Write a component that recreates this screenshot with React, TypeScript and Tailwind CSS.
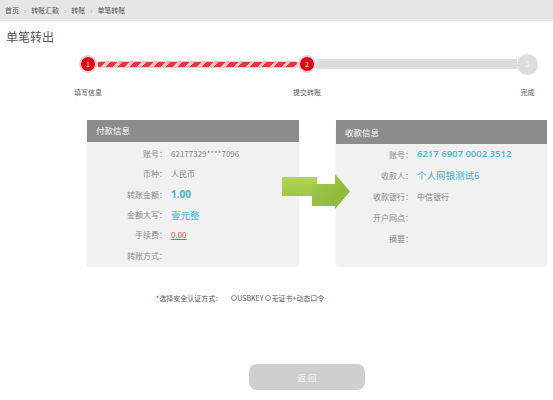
import React from "react";

const payRows: { label: string; value: React.ReactNode }[] = [
  { label: "账号：", value: <span className="text-[#808080]">62177329****7096</span> },
  { label: "币种：", value: <span className="text-[#808080]">人民币</span> },
  {
    label: "转账金额：",
    value: <span className="text-[#4aaed8] font-bold text-[10px] font-['Open_Sans',sans-serif]">1.00</span>,
  },
  { label: "金额大写：", value: <span className="text-[#4aaed8] text-[9.5px]">壹元整</span> },
  { label: "手续费：", value: <span className="text-[#d9534f] underline">0.00</span> },
  { label: "转账方式：", value: null },
];

const recvRows: { label: string; value: React.ReactNode }[] = [
  {
    label: "账号：",
    value: (
      <span className="text-[#4aaed8] font-semibold text-[9.5px] font-['Open_Sans',sans-serif]">
        6217 6907 0002 3512
      </span>
    ),
  },
  { label: "收款人：", value: <span className="text-[#4aaed8] text-[9.5px]">个人网银测试6</span> },
  { label: "收款银行：", value: <span className="text-[#808080]">中信银行</span> },
  { label: "开户网点：", value: null },
  { label: "摘要：", value: null },
];

function StepDot({ n, active, label, size }: { n: number; active: boolean; label: string; size: number }) {
  return (
    <div className="relative shrink-0 flex items-center justify-center" style={{ width: size, height: size }}>
      {active ? (
        <div className="w-[18px] h-[18px] rounded-full bg-[#e6d6d6] flex items-center justify-center">
          <div className="w-[14px] h-[14px] rounded-full bg-[#e60012] flex items-center justify-center text-white text-[7px] leading-none">
            {n}
          </div>
        </div>
      ) : (
        <div className="w-[21px] h-[21px] rounded-full bg-[#dddddd] flex items-center justify-center text-[#f4f4f4] text-[8px] leading-none">
          {n}
        </div>
      )}
      <div
        className={`absolute left-1/2 -translate-x-1/2 whitespace-nowrap text-[7px] leading-[8px] text-[#555] ${
          active ? "top-[33px]" : "top-[34px]"
        }`}
      >
        {label}
      </div>
    </div>
  );
}

function Panel({
  title,
  rows,
  width,
  labelWidth,
  rowClass,
  bodyClass,
}: {
  title: string;
  rows: { label: string; value: React.ReactNode }[];
  width: string;
  labelWidth: string;
  rowClass: string;
  bodyClass: string;
}) {
  return (
    <div className={`${width} h-[146px] bg-[#f1f1f1] rounded-b-[3px] shadow-[0_1px_2px_rgba(0,0,0,0.06)] flex flex-col`}>
      <div className="h-[24px] bg-[#8c8c8c] text-white text-[8.5px] pl-[9px] flex items-center">{title}</div>
      <div className={`flex flex-col ${bodyClass}`}>
        {rows.map((r) => (
          <div key={r.label} className={`flex items-center text-[8px] ${rowClass}`}>
            <div className={`${labelWidth} text-right text-[#888] shrink-0`}>{r.label}</div>
            <div className="pl-[4px]">{r.value}</div>
          </div>
        ))}
      </div>
    </div>
  );
}

export default function App() {
  return (
    <div className="w-[553px] h-[400px] bg-white overflow-hidden font-['Noto_Sans_CJK_SC','Liberation_Sans',sans-serif]">
      {/* breadcrumb */}
      <div className="h-[21px] bg-[#e6e6e6] flex items-center pl-[5px] gap-[5px] text-[7px] text-[#555]">
        <span>首页</span>
        <span className="text-[#999]">›</span>
        <span>转账汇款</span>
        <span className="text-[#999]">›</span>
        <span>转账</span>
        <span className="text-[#999]">›</span>
        <span>单笔转账</span>
      </div>

      <div className="mt-[9px] pl-[6px] text-[12px] leading-[14px] text-[#555]">单笔转出</div>

      {/* stepper */}
      <div className="mt-[9px] h-[22px] pl-[79px] flex items-center">
        <StepDot n={1} active label="填写信息" size={18} />
        <div className="w-[201px] h-[7px] rounded-[2px] border border-[#f3c9c9] bg-[repeating-linear-gradient(135deg,#e8363c_0px,#e8363c_5.5px,#f6c6c6_5.5px,#f6c6c6_8.5px)]" />
        <StepDot n={2} active label="提交转账" size={18} />
        <div className="w-[201px] h-[10px] bg-[#dddddd]" />
        <StepDot n={3} active={false} label="完成" size={21} />
      </div>

      {/* payer / payee */}
      <div className="mt-[45px] pl-[87px] flex gap-[37px] relative">
        <Panel
          title="付款信息"
          rows={payRows}
          width="w-[212px]"
          labelWidth="w-[80px]"
          rowClass="h-[20.4px]"
          bodyClass="pt-[2px]"
        />
        <Panel
          title="收款信息"
          rows={recvRows}
          width="w-[211px]"
          labelWidth="w-[77px]"
          rowClass="h-[21px]"
          bodyClass="pt-0"
        />
        <svg className="absolute left-[280px] top-[49px]" width="72" height="45" viewBox="0 0 72 45">
          <defs>
            <linearGradient id="g1" x1="0" y1="0" x2="0" y2="1">
              <stop offset="0" stopColor="#b4d65a" />
              <stop offset="1" stopColor="#9cc742" />
            </linearGradient>
            <linearGradient id="g2" x1="0" y1="0" x2="1" y2="1">
              <stop offset="0" stopColor="#a3cb48" />
              <stop offset="1" stopColor="#86b633" />
            </linearGradient>
          </defs>
          <rect x="2" y="8" width="35" height="19" fill="url(#g1)" />
          <polygon points="32,15 55,15 55,5 70,22.5 55,40 55,37 32,37" fill="url(#g2)" />
        </svg>
      </div>

      {/* security */}
      <div className="mt-[27px] pl-[156px] h-[10px] flex items-center text-[7px] text-[#555]">
        <span className="text-[#e60012]">*</span>
        <span>选择安全认证方式：</span>
        <span className="ml-[9px] inline-block w-[6px] h-[6px] rounded-full border border-[#888]" />
        <span>USBKEY</span>
        <span className="ml-[2px] inline-block w-[6px] h-[6px] rounded-full border border-[#888]" />
        <span>无证书+动态口令</span>
      </div>

      {/* back button */}
      <div className="mt-[61px] pl-[249px]">
        <div className="w-[116px] h-[26px] rounded-[8px] bg-[#cfcfcf] flex items-center justify-center text-[#f7f7f7] text-[8.5px]">
          返 回
        </div>
      </div>
    </div>
  );
}
